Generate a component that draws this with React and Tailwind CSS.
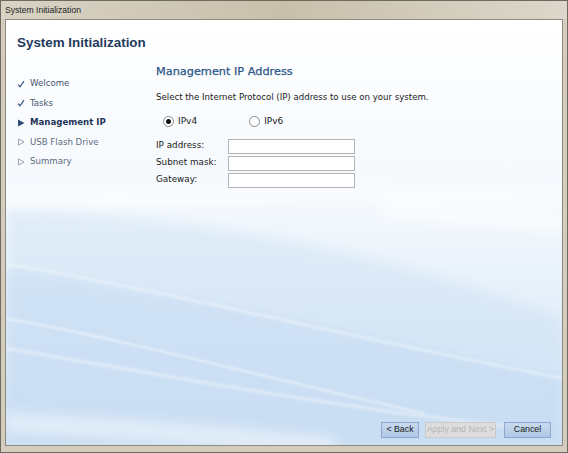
import React, { useState } from 'react';

const navItems = [
  { label: 'Welcome', state: 'done' },
  { label: 'Tasks', state: 'done' },
  { label: 'Management IP', state: 'current' },
  { label: 'USB Flash Drive', state: 'todo' },
  { label: 'Summary', state: 'todo' },
];

function NavIcon({ state }) {
  if (state === 'done') {
    return (
      <svg width="8" height="8" viewBox="0 0 8 8" className="shrink-0">
        <path d="M1 4.6 L3 6.8 L7 1.2" fill="none" stroke="#3f5c84" strokeWidth="1.3" />
      </svg>
    );
  }
  if (state === 'current') {
    return (
      <svg width="8" height="8" viewBox="0 0 8 8" className="shrink-0">
        <path d="M1 0.5 L7.5 4 L1 7.5 Z" fill="#2c4a75" />
      </svg>
    );
  }
  return (
    <svg width="8" height="8" viewBox="0 0 8 8" className="shrink-0">
      <path d="M1.5 1 L7 4 L1.5 7 Z" fill="none" stroke="#9aa3ae" strokeWidth="1" />
    </svg>
  );
}

function Radio({ checked, label, onClick }) {
  return (
    <button type="button" onClick={onClick} className="flex items-center gap-[4px]">
      <span className="w-[11px] h-[11px] rounded-full border border-[#8a8a8a] bg-white flex items-center justify-center">
        {checked && <span className="w-[5px] h-[5px] rounded-full bg-[#111]" />}
      </span>
      <span className="text-[9px] text-[#222]">{label}</span>
    </button>
  );
}

function Field({ label }) {
  return (
    <div className="flex items-center h-[15px]">
      <span className="w-[72px] text-[8.8px] text-[#222]">{label}</span>
      <input className="w-[127px] h-[15px] border border-[#b4b4b4] bg-white outline-none" />
    </div>
  );
}

export default function App() {
  const [proto, setProto] = useState('ipv4');

  return (
    <div className="w-[568px] h-[453px] flex flex-col bg-[#d4cdbd] border border-[#6f6a60] overflow-hidden" style={{ fontFamily: '"DejaVu Sans", Verdana, sans-serif' }}>
      {/* title bar */}
      <div className="h-[18px] shrink-0 flex items-center pl-[4px] bg-gradient-to-r from-[#d9d3c5] via-[#c9c0ab] to-[#dcd7cb]">
        <span className="text-[8.6px] text-[#1e1e1e]" style={{ fontFamily: '"Liberation Sans", Arial, sans-serif' }}>System Initialization</span>
      </div>

      <div className="flex-1 flex px-[4px] pb-[6px]">
        <div className="relative flex-1 flex flex-col border border-[#8f8a7e] bg-gradient-to-b from-white via-[#f3f8fd] via-45% to-[#cfe1f4] overflow-hidden">
          {/* background swooshes */}
          <svg className="absolute inset-0 pointer-events-none" width="100%" height="100%" viewBox="0 0 558 427" preserveAspectRatio="none">
            <defs>
              <filter id="soft" x="-10%" y="-10%" width="120%" height="120%">
                <feGaussianBlur stdDeviation="6" />
              </filter>
              <filter id="soft2" x="-10%" y="-10%" width="120%" height="120%">
                <feGaussianBlur stdDeviation="1.2" />
              </filter>
            </defs>
            <g filter="url(#soft)">
              <path d="M0 190 C 180 195, 380 230, 558 300 L558 427 L0 427 Z" fill="#cde0f4" opacity="0.45" />
              <path d="M0 250 C 200 280, 380 320, 558 360 L558 427 L0 427 Z" fill="#c3d9f1" opacity="0.45" />
              <path d="M0 180 C 160 175, 400 170, 558 180" fill="none" stroke="#ffffff" strokeWidth="18" opacity="0.5" />
              <path d="M380 190 C 450 195, 510 200, 558 205" fill="none" stroke="#ffffff" strokeWidth="18" opacity="0.5" />
              <path d="M0 405 C 120 410, 250 420, 330 430" fill="none" stroke="#ffffff" strokeWidth="20" opacity="0.45" />
            </g>
            <g filter="url(#soft2)">
              <path d="M0 245 C 150 270, 350 320, 558 360" fill="none" stroke="#ffffff" strokeWidth="3" opacity="0.35" />
              <path d="M0 300 C 140 325, 280 365, 420 395" fill="none" stroke="#ffffff" strokeWidth="2" opacity="0.55" />
              <path d="M0 330 C 150 355, 330 390, 520 410" fill="none" stroke="#ffffff" strokeWidth="4" opacity="0.3" />
            </g>
          </svg>

          <div className="relative pl-[11px] pt-[13px]">
            <h1 className="text-[13.4px] font-bold text-[#1f3a5c]" style={{ fontFamily: '"Liberation Sans", Arial, sans-serif' }}>System Initialization</h1>
          </div>

          <div className="relative flex pt-[12px]">
            <ul className="w-[150px] shrink-0 pl-[11px] pt-[13px] flex flex-col gap-[8.5px]">
              {navItems.map((item) => (
                <li key={item.label} className="flex items-center gap-[5px] h-[11px]">
                  <NavIcon state={item.state} />
                  <span
                    className={`text-[8.6px] ${
                      item.state === 'current'
                        ? 'font-bold text-[#1f3558]'
                        : item.state === 'done'
                        ? 'text-[#44566f]'
                        : 'text-[#5d6b80]'
                    }`}
                  >
                    {item.label}
                  </span>
                </li>
              ))}
            </ul>

            <div className="flex-1 flex flex-col">
              <h2 className="text-[11.3px] text-[#2a5585] leading-[14px] [-webkit-text-stroke:0.25px_#2a5585]">Management IP Address</h2>
              <p className="mt-[12px] text-[8.6px] text-[#222]">Select the Internet Protocol (IP) address to use on your system.</p>
              <div className="mt-[11px] ml-[7px] flex items-center gap-[52px]">
                <Radio checked={proto === 'ipv4'} label="IPv4" onClick={() => setProto('ipv4')} />
                <Radio checked={proto === 'ipv6'} label="IPv6" onClick={() => setProto('ipv6')} />
              </div>
              <div className="mt-[10px] flex flex-col gap-[2px]">
                <Field label="IP address:" />
                <Field label="Subnet mask:" />
                <Field label="Gateway:" />
              </div>
            </div>
          </div>

          <div className="flex-1" />

          <div className="relative flex justify-end gap-[6px] pr-[11px] pb-[7px]" style={{ fontFamily: '"Liberation Sans", Arial, sans-serif' }}>
            <button className="w-[38px] h-[16px] text-[8.8px] text-[#1a1a1a] bg-gradient-to-b from-[#c8daef] to-[#afc8e6] border border-[#8ea9cc]">&lt; Back</button>
            <button disabled className="w-[71px] h-[16px] text-[8.8px] text-[#b5b5b5] bg-[#dddddd] border border-[#cacaca]">Apply and Next &gt;</button>
            <button className="ml-[2px] w-[47px] h-[16px] text-[8.8px] text-[#1a1a1a] bg-gradient-to-b from-[#c8daef] to-[#afc8e6] border border-[#8ea9cc]">Cancel</button>
          </div>
        </div>
      </div>
    </div>
  );
}
